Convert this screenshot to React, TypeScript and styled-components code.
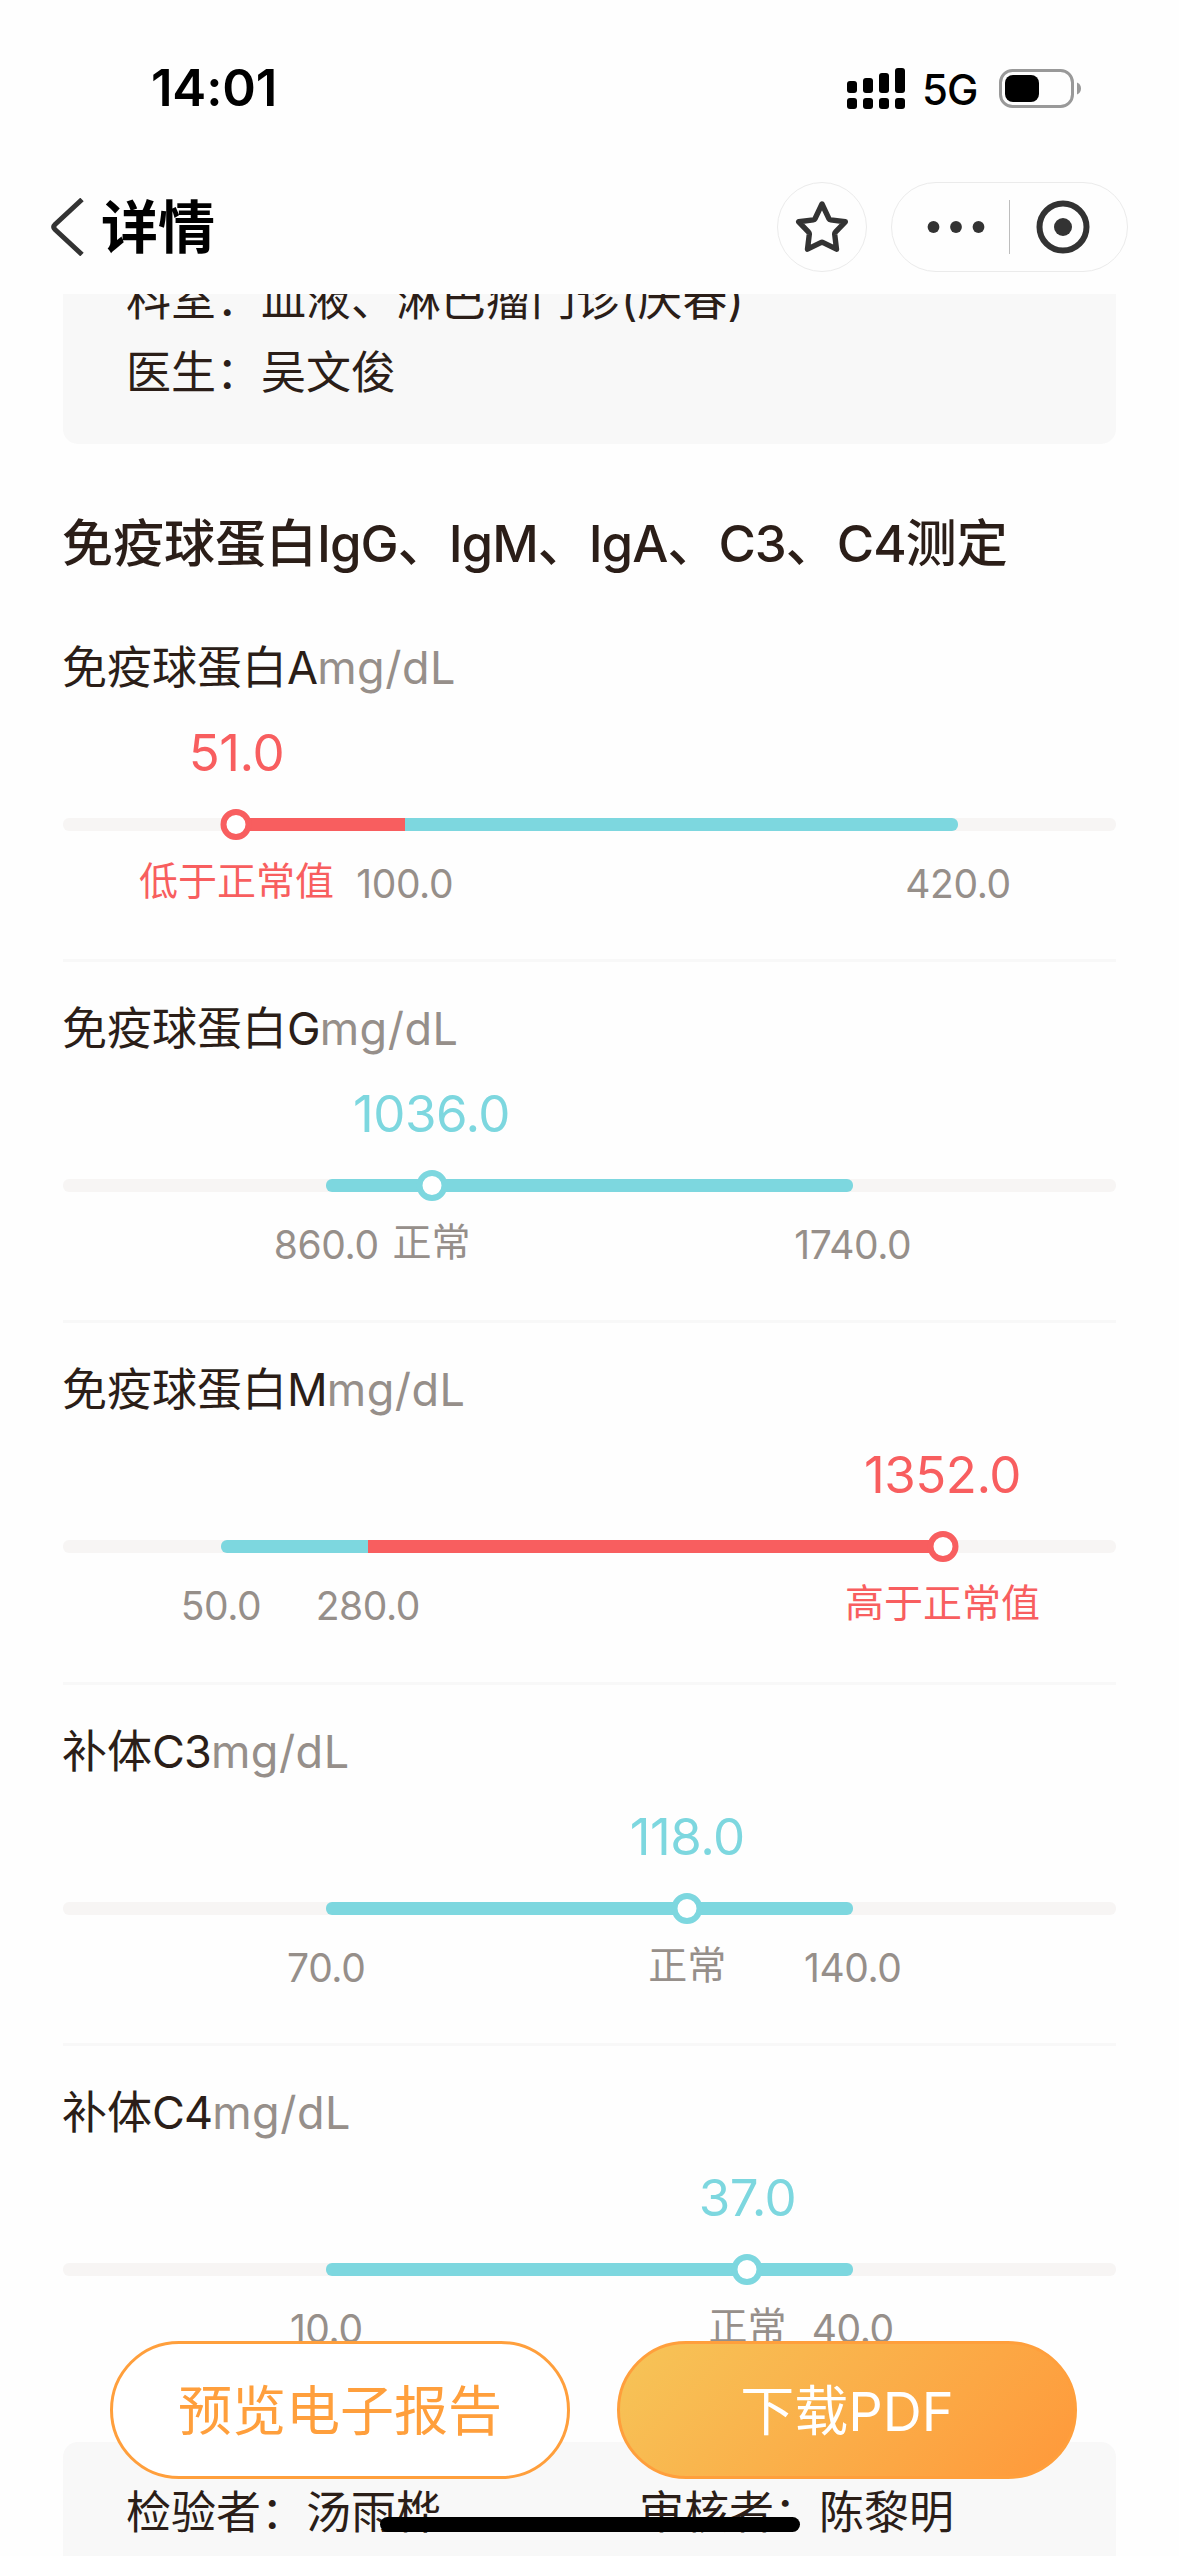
import React from 'react';
import styled, { createGlobalStyle } from 'styled-components';

const RED = '#f85e5f';
const TEAL = '#7dd7df';
const INK = '#2b1e18';
const MUTED = '#968f8a';
const ORANGE = '#ff9f3c';

const GlobalStyle = createGlobalStyle`
  html, body { margin: 0; padding: 0; background: #fff; }
  *, *::before, *::after { box-sizing: border-box; }
  body {
    font-family: Inter, "Noto Sans CJK SC", sans-serif;
    color: ${INK};
  }
`;

const Screen = styled.div`
  position: relative;
  display: flex;
  flex-direction: column;
  width: 1179px;
  height: 2556px;
  overflow: hidden;
  background: #fefefe;
`;

const StatusBar = styled.div`
  display: flex;
  flex: none;
  align-items: center;
  justify-content: space-between;
  height: 176px;
  padding: 0 98px 0 151px;
  color: #000;
`;

const Clock = styled.div`
  font-size: 51px;
  font-weight: 600;
  line-height: 60px;
  letter-spacing: -0.2px;
`;

const StatusIcons = styled.div`
  display: flex;
  align-items: center;
`;

const Network = styled.div`
  width: 57px;
  margin: 3px 20px 0 17px;
  font-size: 42px;
  font-weight: 500;
  line-height: 50px;
  letter-spacing: -1px;
  white-space: nowrap;
`;

const NavBar = styled.div`
  display: flex;
  flex: none;
  align-items: center;
  height: 118px;
  padding: 0 51px 16px 50px;
`;

const NavTitle = styled.div`
  flex: 1;
  margin-left: 16px;
  padding-top: 2px;
  font-size: 57px;
  font-weight: 700;
  line-height: 80px;
  color: #000;
`;

const RoundButton = styled.div`
  display: flex;
  align-items: center;
  justify-content: center;
  width: 90px;
  height: 90px;
  margin-right: 24px;
  border: 1px solid #ebebeb;
  border-radius: 45px;
`;

const Capsule = styled.div`
  display: flex;
  align-items: center;
  justify-content: space-between;
  width: 237px;
  height: 90px;
  padding: 0 37px 0 35px;
  border: 1px solid #ebebeb;
  border-radius: 45px;
`;

const CapsuleDivider = styled.div`
  width: 1px;
  height: 54px;
  margin-right: 2px;
  background: #bdbdbd;
`;

const Viewport = styled.div`
  flex: 1;
  overflow: hidden;
  padding: 0 63px;
`;

const TopCard = styled.div`
  height: 190px;
  margin-top: -40px;
  padding: 9px 63px 0;
  border-radius: 0 0 15px 15px;
  background: #f8f8f8;
`;

const CardLine = styled.div`
  font-size: 45px;
  line-height: 73px;
  white-space: nowrap;
`;

const SectionTitle = styled.h1`
  margin: 64px 0 20.75px -1px;
  font-size: 51px;
  font-weight: 500;
  line-height: 72px;
  white-space: nowrap;
`;

const Latin = styled.span<{ $tracking: number }>`
  letter-spacing: ${(p) => p.$tracking}px;
`;

const Item = styled.section`
  height: 361.25px;
  padding-top: 34px;
  border-bottom: 3px solid #f8f8f8;
`;

const LastItem = styled(Item)`
  border-bottom: none;
`;

const ItemName = styled.div`
  margin-left: -1px;
  font-size: 45px;
  line-height: 66px;
  white-space: nowrap;
`;

const Unit = styled.span`
  color: ${MUTED};
  letter-spacing: 0.5px;
`;

const ScaleRow = styled.div<{ $height: number }>`
  position: relative;
  height: ${(p) => p.$height}px;
`;

const Value = styled.div<{ $color: string }>`
  position: absolute;
  top: 22px;
  transform: translateX(-50%);
  color: ${(p) => p.$color};
  font-size: 51px;
  line-height: 60px;
  letter-spacing: -0.5px;
  white-space: nowrap;
`;

const Track = styled.div`
  position: relative;
  height: 13px;
  border-radius: 6px;
  background: #f7f5f4;
`;

const Segment = styled.div<{ $color: string; $roundStart?: boolean; $roundEnd?: boolean }>`
  position: absolute;
  top: 0;
  height: 13px;
  background: ${(p) => p.$color};
  border-radius: ${(p) =>
    `${p.$roundStart ? 6 : 0}px ${p.$roundEnd ? 6 : 0}px ${p.$roundEnd ? 6 : 0}px ${p.$roundStart ? 6 : 0}px`};
`;

const Knob = styled.div<{ $color: string }>`
  position: absolute;
  top: -9px;
  width: 31px;
  height: 31px;
  transform: translateX(-50%);
  border: 6px solid ${(p) => p.$color};
  border-radius: 50%;
  background: #fff;
`;

const Bound = styled.div`
  position: absolute;
  top: 29px;
  transform: translateX(-50%);
  color: ${MUTED};
  font-size: 39px;
  line-height: 48px;
  letter-spacing: -0.4px;
`;

const Verdict = styled(Bound)<{ $color: string }>`
  top: 22px;
  line-height: 56px;
  letter-spacing: 0;
  color: ${(p) => p.$color};
  white-space: nowrap;
`;

const BottomCard = styled.div`
  display: grid;
  grid-template-columns: 513px 1fr;
  height: 200px;
  margin-top: 35px;
  padding: 34px 0 0 63px;
  border-radius: 15px;
  background: #f8f8f8;
`;

const ActionBar = styled.div`
  position: absolute;
  right: 102px;
  bottom: 77px;
  left: 110px;
  display: flex;
  justify-content: space-between;
`;

const ActionButton = styled.button<{ $filled?: boolean }>`
  width: 460px;
  height: 138px;
  padding: 4px 0 0;
  border: 3px solid ${ORANGE};
  border-radius: 69px;
  background: ${(p) => (p.$filled ? 'linear-gradient(135deg, #f6c558 0%, #ff983a 100%)' : '#fff')};
  background-origin: border-box;
  color: ${(p) => (p.$filled ? '#fff' : ORANGE)};
  font-family: inherit;
  font-size: 54px;
  line-height: 80px;
`;

const HomeIndicator = styled.div`
  position: absolute;
  bottom: 24px;
  left: 380px;
  width: 420px;
  height: 15px;
  border-radius: 8px;
  background: #000;
`;

type Part = { from: number; to: number; color: string; roundStart?: boolean; roundEnd?: boolean };

type Result = {
  name: string;
  value: string;
  at: number;
  verdict: string;
  abnormal: boolean;
  parts: Part[];
  bounds: { at: number; text: string }[];
};

/* Positions are percentages of the scale. */
const results: Result[] = [
  {
    name: '免疫球蛋白A',
    value: '51.0',
    at: 16.47,
    verdict: '低于正常值',
    abnormal: true,
    parts: [
      { from: 16.47, to: 32.45, color: RED },
      { from: 32.45, to: 85, color: TEAL, roundEnd: true },
    ],
    bounds: [{ at: 32.45, text: '100.0' }, { at: 85, text: '420.0' }],
  },
  {
    name: '免疫球蛋白G',
    value: '1036.0',
    at: 35,
    verdict: '正常',
    abnormal: false,
    parts: [{ from: 25, to: 75, color: TEAL, roundStart: true, roundEnd: true }],
    bounds: [{ at: 25, text: '860.0' }, { at: 75, text: '1740.0' }],
  },
  {
    name: '免疫球蛋白M',
    value: '1352.0',
    at: 83.53,
    verdict: '高于正常值',
    abnormal: true,
    parts: [
      { from: 15, to: 28.95, color: TEAL, roundStart: true },
      { from: 28.95, to: 83.53, color: RED },
    ],
    bounds: [{ at: 15, text: '50.0' }, { at: 28.95, text: '280.0' }],
  },
  {
    name: '补体C3',
    value: '118.0',
    at: 59.29,
    verdict: '正常',
    abnormal: false,
    parts: [{ from: 25, to: 75, color: TEAL, roundStart: true, roundEnd: true }],
    bounds: [{ at: 25, text: '70.0' }, { at: 75, text: '140.0' }],
  },
  {
    name: '补体C4',
    value: '37.0',
    at: 65,
    verdict: '正常',
    abnormal: false,
    parts: [{ from: 25, to: 75, color: TEAL, roundStart: true, roundEnd: true }],
    bounds: [{ at: 25, text: '10.0' }, { at: 75, text: '40.0' }],
  },
];

/* Tightens the Latin runs of a mixed Chinese and Latin text. */
function MixedText({ text, tracking }: { text: string; tracking: number }) {
  return (
    <>
      {text.split(/([A-Za-z0-9]+)/).map((run, i) =>
        i % 2 === 1 ? (
          <Latin key={i} $tracking={tracking}>{run}</Latin>
        ) : (
          run
        ),
      )}
    </>
  );
}

function SignalIcon() {
  const tops = [80, 77, 72, 67];
  return (
    <svg width="58" height="41" viewBox="0 0 58 41">
      {tops.map((top, i) => (
        <g key={top}>
          <rect x={i * 16} y={top - 67} width="10" height={92 - top} rx="3" />
          <rect x={i * 16} y="30" width="10" height="11" rx="3" />
        </g>
      ))}
    </svg>
  );
}

function BatteryIcon() {
  return (
    <svg width="82" height="39" viewBox="0 0 82 39">
      <rect x="1.5" y="1.5" width="72" height="36" rx="12" fill="none" stroke="#999" strokeWidth="3" />
      <rect x="6" y="6" width="34" height="27" rx="8" />
      <path d="M78 13.5c2.600 1 4 3.200 4 6s-1.400 5-4 6z" fill="#999" />
    </svg>
  );
}

function BackIcon() {
  return (
    <svg width="35" height="58" viewBox="0 0 35 58" fill="none" stroke="#333" strokeWidth="5">
      <path d="M32 1.500L5 26.500q-2.500 2.500 0 5L32 56.500" />
    </svg>
  );
}

function StarIcon() {
  return (
    <svg width="54" height="54" viewBox="0 0 54 54" fill="none" stroke="#333" strokeWidth="5.400" strokeLinejoin="round">
      <path d="M27 4L34 18.800Q34.500 19.800 35.600 19.900L50.300 21.800L40.400 32.200Q39.600 33 39.700 34.200L41.500 49.200L28.200 42.600Q27 42 25.800 42.600L12.500 49.200L14.300 34.200Q14.400 33 13.600 32.200L3.700 21.800L18.400 19.900Q19.500 19.800 20 18.800Z" />
    </svg>
  );
}

function MoreIcon() {
  return (
    <svg width="58" height="14" viewBox="0 0 58 14" fill="#333">
      <circle cx="6.500" cy="7" r="5.900" />
      <circle cx="29" cy="7" r="5.900" />
      <circle cx="51.500" cy="7" r="5.900" />
    </svg>
  );
}

function TargetIcon() {
  return (
    <svg width="54" height="54" viewBox="0 0 54 54">
      <circle cx="27" cy="27" r="23.500" fill="none" stroke="#333" strokeWidth="6" />
      <circle cx="27" cy="27" r="9" fill="#333" />
    </svg>
  );
}

function ResultItem({ result, last }: { result: Result; last?: boolean }) {
  const Box = last ? LastItem : Item;
  const color = result.abnormal ? RED : TEAL;
  return (
    <Box>
      <ItemName>
        <MixedText text={result.name} tracking={-0.9} />
        <Unit>mg/dL</Unit>
      </ItemName>
      <ScaleRow $height={117}>
        <Value $color={color} style={{ left: `${result.at}%` }}>{result.value}</Value>
      </ScaleRow>
      <Track>
        {result.parts.map((p) => (
          <Segment
            key={p.from}
            $color={p.color}
            $roundStart={p.roundStart}
            $roundEnd={p.roundEnd}
            style={{ left: `${p.from}%`, width: `${p.to - p.from}%` }}
          />
        ))}
        <Knob $color={color} style={{ left: `${result.at}%` }} />
      </Track>
      <ScaleRow $height={90}>
        {result.bounds.map((b) => (
          <Bound key={b.at} style={{ left: `${b.at}%` }}>{b.text}</Bound>
        ))}
        <Verdict $color={result.abnormal ? RED : MUTED} style={{ left: `${result.at}%` }}>
          {result.verdict}
        </Verdict>
      </ScaleRow>
    </Box>
  );
}

export default function App() {
  return (
    <Screen>
      <GlobalStyle />
      <StatusBar>
        <Clock>14:01</Clock>
        <StatusIcons>
          <SignalIcon />
          <Network>5G</Network>
          <BatteryIcon />
        </StatusIcons>
      </StatusBar>
      <NavBar>
        <BackIcon />
        <NavTitle>详情</NavTitle>
        <RoundButton>
          <StarIcon />
        </RoundButton>
        <Capsule>
          <MoreIcon />
          <CapsuleDivider />
          <TargetIcon />
        </Capsule>
      </NavBar>
      <Viewport>
        <TopCard>
          <CardLine>科室：血液、淋巴瘤门诊(庆春)</CardLine>
          <CardLine>医生：吴文俊</CardLine>
        </TopCard>
        <SectionTitle>
          <MixedText text="免疫球蛋白IgG、IgM、IgA、C3、C4测定" tracking={-1} />
        </SectionTitle>
        {results.map((r, i) => (
          <ResultItem key={r.name} result={r} last={i === results.length - 1} />
        ))}
        <BottomCard>
          <CardLine>检验者：汤雨桦</CardLine>
          <CardLine>审核者：陈黎明</CardLine>
        </BottomCard>
      </Viewport>
      <ActionBar>
        <ActionButton>预览电子报告</ActionButton>
        <ActionButton $filled>下载PDF</ActionButton>
      </ActionBar>
      <HomeIndicator />
    </Screen>
  );
}
